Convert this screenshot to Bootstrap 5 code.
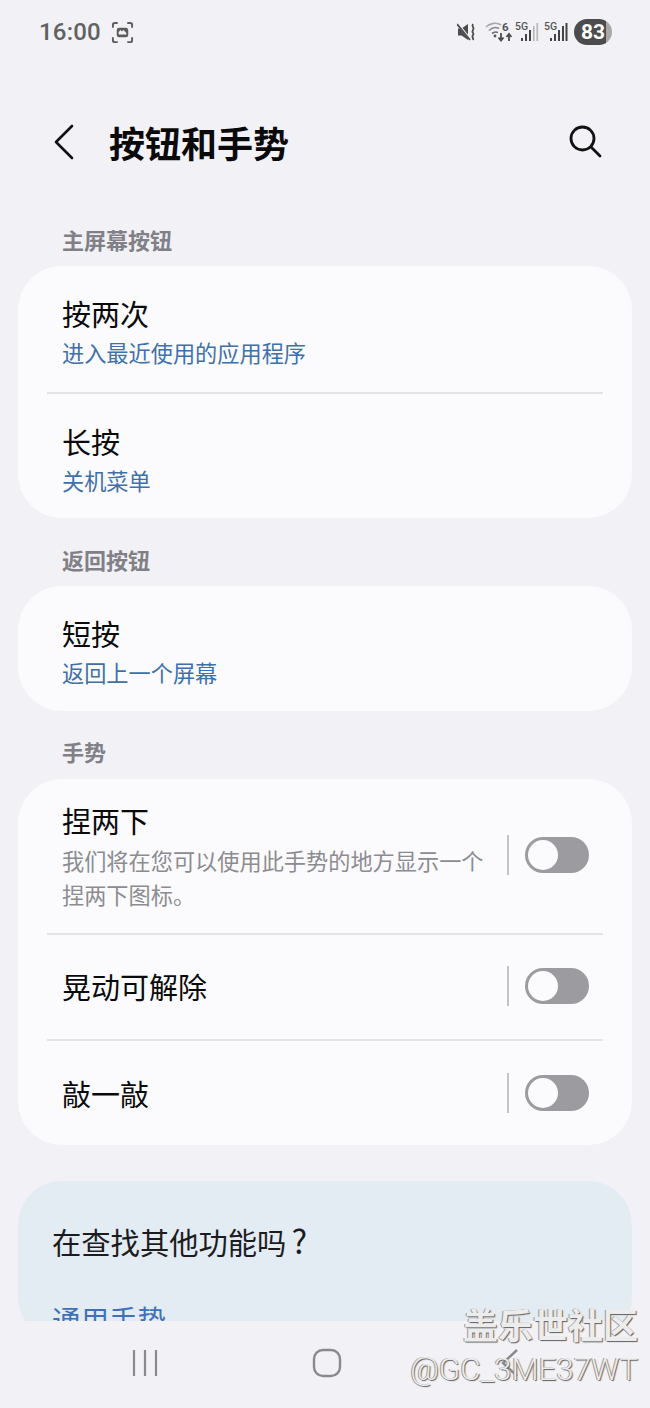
<!DOCTYPE html>
<html lang="zh-CN">
<head>
    <meta charset="UTF-8">
    <title>按钮和手势</title>
    <meta name="viewport" content="width=device-width, initial-scale=1">
    <link href="https://cdn.jsdelivr.net/npm/bootstrap@5.3.0/dist/css/bootstrap.min.css" rel="stylesheet">
    <style>
        body { background: #f1f1f6; font-family: "Noto Sans CJK SC", "Noto Sans", sans-serif; color: #0a0a0a; }
        .phone { width: 650px; height: 1408px; position: relative; overflow: hidden; }
        .status-bar { height: 64px; padding: 0 38px 0 39px; }
        .clock { font-family: Roboto, sans-serif; font-weight: 500; font-size: 24px; color: #616161; letter-spacing: .2px; }
        .batt { width: 38px; height: 26px; border-radius: 13px; background: linear-gradient(90deg, #4c4c4c 84%, #a8a8a8 84%); color: #fff; font-family: Roboto, sans-serif; font-weight: 700; font-size: 21px; line-height: 26px; text-align: center; }
        .top-bar { height: 152px; padding: 4px 48px 0 52px; }
        .page-title { font-size: 36px; font-weight: 700; margin: 0 0 0 33px; line-height: 1; }
        .scroll-area { height: 1105px; overflow: hidden; }
        .sec-label { height: 50px; margin: 0 0 0 62px; font-size: 22px; font-weight: 700; color: #808086; line-height: 46px; }
        .sec-label.later { margin-top: 18px; height: 50px; line-height: 47px; }
        .sec-label.short-gap { line-height: 45px; }
        .panel { margin: 0 18px; background: #fbfbfe; border-radius: 44px; padding: 0 29px; }
        .panel-row { padding: 0 14px 0 15px; }
        .panel-row + .panel-row { border-top: 2px solid #e4e4e8; }
        .nav-row { height: 126px; padding-top: 26px; }
        .nav-row.solo { height: 125px; }
        .row-main { font-size: 29px; line-height: 42px; }
        .row-sub { font-size: 22.2px; line-height: 34px; margin-top: 1px; color: #3f70a8; }
        .row-desc { font-size: 22.2px; line-height: 34px; margin-top: 2px; color: #8c8c90; width: 430px; }
        .toggle-row { height: 106px; }
        .toggle-row.tall { height: 154px; padding-top: 21px; padding-bottom: 23px; }
        .toggle-row.lifted { padding-bottom: 2px; }
        .split { width: 2px; height: 40px; background: #c4c4c8; margin-right: 16px; }
        .switch-track { width: 64px; height: 36px; border-radius: 18px; background: #9b9ba0; padding: 3px; }
        .switch-knob { width: 30px; height: 30px; border-radius: 50%; background: #fbfbfe; }
        .more-box { margin: 36px 18px 0; background: #e3ebf3; border-radius: 44px; padding: 38px 34px 0; height: 160px; }
        .more-title { font-size: 29.3px; line-height: 44px; color: #1c1c1e; margin-bottom: 36px; }
        .more-q { margin-left: 5px; font-size: 33px; line-height: 1; }
        .more-link { font-size: 28.5px; line-height: 40px; color: #3f70b8; }
        .nav-keys { height: 87px; padding: 0 0 4px 54px; }
        .nav-key { width: 182px; }
        .watermark { position: absolute; right: 12px; top: 1302px; text-align: right; color: #ececec; text-shadow: 1px 1px 1px #5f5f5f, -1px 0 0 #999; pointer-events: none; }
        .wm-cn { font-size: 35px; font-weight: 700; line-height: 44px; }
        .wm-id { font-family: Roboto, sans-serif; font-weight: 300; font-size: 31.3px; line-height: 38px; margin-top: 5px; }
    </style>
</head>
<body>
<div class="phone">
    <!-- status bar -->
    <div class="status-bar d-flex align-items-center justify-content-between">
        <div class="d-flex align-items-center" style="gap:10px">
            <span class="clock">16:00</span>
            <svg width="23" height="23" viewBox="0 0 24 24" fill="none" stroke="#5c5c5c" stroke-width="2">
                <path d="M2 7V4a2 2 0 0 1 2-2h3M17 2h3a2 2 0 0 1 2 2v3M22 17v3a2 2 0 0 1-2 2h-3M7 22H4a2 2 0 0 1-2-2v-3"/>
                <rect x="6" y="7" width="12" height="10" rx="2.500" fill="#5c5c5c" stroke="none"/>
                <path d="M8 12l2-2 1.500 1.500L13 10l3 3v1.500H8z" fill="#f1f1f6" stroke="none" transform="translate(0 -.5)"/>
            </svg>
        </div>
        <div class="d-flex align-items-center">
            <svg width="20" height="20" viewBox="0 0 20 20" fill="#4c4c4c">
                <path d="M1 6.500h3.500L11 2v16l-6.500-4.500H1z"/>
                <path d="M0 1l13 16" stroke="#f1f1f6" stroke-width="2.500"/>
                <path d="M0 2l13 16" stroke="#4c4c4c" stroke-width="1.800"/>
                <path d="M16 2c-2 3 2 3 0 6s2 3 0 5 1 3 0 5" fill="none" stroke="#4c4c4c" stroke-width="1.800"/>
            </svg>
            <svg width="27" height="22" viewBox="0 0 27 22" fill="none" stroke="#a9a9a9" stroke-width="1.600" style="margin-left:8px">
                <path d="M1 6c4-4 11-5 15-2"/>
                <path d="M4 9.500c3-3 7-3.500 10-2" stroke="#8a8a8a"/>
                <path d="M7 12.500c2-1.500 4-1.800 6-1" stroke="#6a6a6a"/>
                <circle cx="10" cy="15" r="1.400" fill="#555" stroke="none"/>
                <path d="M16 12v7M13.500 16.500L16 19.500l2.500-3M24 20v-7M21.500 16l2.500-3 2.500 3" stroke="#4c4c4c" stroke-width="1.800"/>
                <text x="17" y="10" font-family="Roboto, sans-serif" font-size="11.500" font-weight="700" fill="#555" stroke="none">6</text>
            </svg>
            <svg width="24" height="22" viewBox="0 0 24 22" style="margin-left:3px">
                <text x="0" y="9" font-family="Roboto, sans-serif" font-size="10.500" font-weight="500" fill="#555">5G</text>
                <rect x="6" y="17" width="2" height="3" fill="#444"/><rect x="10" y="13" width="2" height="7" fill="#444"/><rect x="14" y="9" width="2" height="11" fill="#444"/>
                <rect x="18" y="5" width="1.600" height="15" fill="#b5b5b5"/><rect x="21.500" y="2" width="1.600" height="18" fill="#b5b5b5"/>
            </svg>
            <svg width="24" height="22" viewBox="0 0 24 22" style="margin-left:5px">
                <text x="0" y="9" font-family="Roboto, sans-serif" font-size="10.500" font-weight="500" fill="#555">5G</text>
                <rect x="6" y="17" width="2" height="3" fill="#444"/><rect x="10" y="13" width="2" height="7" fill="#444"/><rect x="14" y="9" width="2" height="11" fill="#444"/>
                <rect x="18" y="5" width="2" height="15" fill="#444"/><rect x="21.500" y="2" width="2" height="18" fill="#444"/>
            </svg>
            <div class="batt" style="margin-left:6px">83</div>
        </div>
    </div>

    <!-- title row -->
    <div class="top-bar d-flex align-items-center">
        <svg width="24" height="36" viewBox="0 0 24 36" fill="none" stroke="#111" stroke-width="2.600" stroke-linecap="round" stroke-linejoin="round">
            <path d="M20 2L4 18l16 16"/>
        </svg>
        <h1 class="page-title flex-grow-1">按钮和手势</h1>
        <svg width="34" height="34" viewBox="0 0 34 34" fill="none" stroke="#111" stroke-width="2.800" stroke-linecap="round">
            <circle cx="14.500" cy="13.500" r="11.500"/>
            <path d="M23 22l9 9"/>
        </svg>
    </div>

    <div class="scroll-area">
        <div class="sec-label">主屏幕按钮</div>
        <div class="panel">
            <div class="panel-row nav-row">
                <div class="row-main">按两次</div>
                <div class="row-sub">进入最近使用的应用程序</div>
            </div>
            <div class="panel-row nav-row">
                <div class="row-main">长按</div>
                <div class="row-sub">关机菜单</div>
            </div>
        </div>

        <div class="sec-label later">返回按钮</div>
        <div class="panel">
            <div class="panel-row nav-row solo">
                <div class="row-main">短按</div>
                <div class="row-sub">返回上一个屏幕</div>
            </div>
        </div>

        <div class="sec-label later short-gap">手势</div>
        <div class="panel">
            <div class="panel-row toggle-row tall d-flex align-items-center justify-content-between">
                <div>
                    <div class="row-main">捏两下</div>
                    <div class="row-desc">我们将在您可以使用此手势的地方显示一个捏两下图标。</div>
                </div>
                <div class="d-flex align-items-center">
                    <div class="split"></div>
                    <div class="switch-track"><div class="switch-knob"></div></div>
                </div>
            </div>
            <div class="panel-row toggle-row lifted d-flex align-items-center justify-content-between">
                <div class="row-main">晃动可解除</div>
                <div class="d-flex align-items-center">
                    <div class="split"></div>
                    <div class="switch-track"><div class="switch-knob"></div></div>
                </div>
            </div>
            <div class="panel-row toggle-row d-flex align-items-center justify-content-between">
                <div class="row-main">敲一敲</div>
                <div class="d-flex align-items-center">
                    <div class="split"></div>
                    <div class="switch-track"><div class="switch-knob"></div></div>
                </div>
            </div>
        </div>

        <div class="more-box">
            <div class="more-title">在查找其他功能吗<span class="more-q">?</span></div>
            <div class="more-link">通用手势</div>
        </div>
    </div>

    <!-- nav keys -->
    <div class="nav-keys d-flex align-items-center">
        <div class="nav-key d-flex justify-content-center">
            <svg width="28" height="28" viewBox="0 0 28 28" stroke="#8a8a8e" stroke-width="2.200"><path d="M3 1v26M14 1v26M25 1v26"/></svg>
        </div>
        <div class="nav-key d-flex justify-content-center">
            <svg width="30" height="30" viewBox="0 0 30 30" fill="none" stroke="#8a8a8e" stroke-width="2.400"><rect x="2" y="2" width="26" height="26" rx="9"/></svg>
        </div>
        <div class="nav-key d-flex justify-content-center">
            <svg width="20" height="30" viewBox="0 0 20 30" fill="none" stroke="#8a8a8e" stroke-width="2.400"><path d="M18 2L4 15l14 13"/></svg>
        </div>
    </div>

    <!-- forum watermark over the screenshot -->
    <div class="watermark">
        <div class="wm-cn">盖乐世社区</div>
        <div class="wm-id">@GC_3ME37WT</div>
    </div>
</div>
<script src="https://cdn.jsdelivr.net/npm/bootstrap@5.3.0/dist/js/bootstrap.bundle.min.js"></script>
</body>
</html>
